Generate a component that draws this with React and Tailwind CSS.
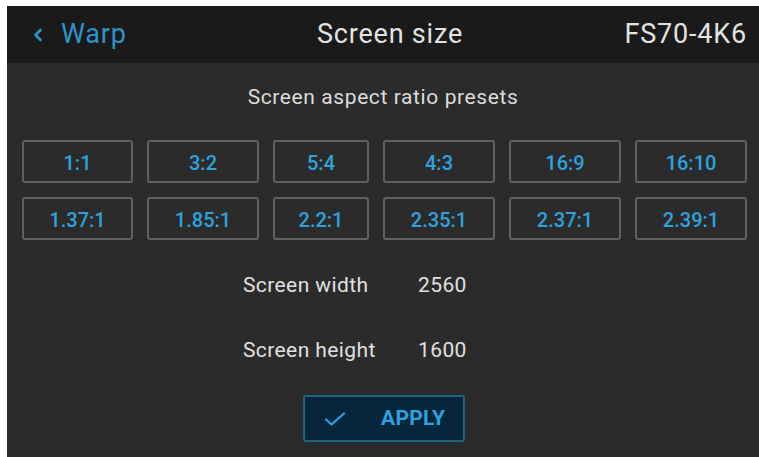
import React from 'react';

const presets = [
  ['1:1', '3:2', '5:4', '4:3', '16:9', '16:10'],
  ['1.37:1', '1.85:1', '2.2:1', '2.35:1', '2.37:1', '2.39:1'],
];

export default function App() {
  return (
    <div className="w-[759px] h-[457px] bg-white pt-[6px] pl-[7px] overflow-hidden font-['Roboto',sans-serif]">
      <div className="h-full bg-[#2b2b2b] flex flex-col">
        {/* Header */}
        <div className="h-[57px] bg-[#1a1a1a] flex items-center justify-between pl-[26px] pr-[12px] shrink-0 text-[27px] tracking-[0.8px]">
          <div className="flex items-center gap-[18px] text-[#2b95c9] w-[200px]">
            <svg width="10" height="14" viewBox="0 0 10 14" className="mt-[1px]">
              <path d="M7.5 2 L2.5 7 L7.5 12" fill="none" stroke="#2b95c9" strokeWidth="2.6" strokeLinecap="round" strokeLinejoin="round" />
            </svg>
            <span>Warp</span>
          </div>
          <span className="text-[#e2e2e2]">Screen size</span>
          <span className="text-[#e2e2e2] w-[200px] text-right">FS70-4K6</span>
        </div>

        {/* Presets */}
        <div className="text-center text-[#dcdcdc] text-[21px] tracking-[0.6px] mt-[24px] leading-none">
          Screen aspect ratio presets
        </div>

        <div className="mt-[32px] pl-[15px] flex flex-col gap-[14px]">
          {presets.map((row, i) => (
            <div key={i} className="grid grid-cols-[111px_112px_96px_112px_112px_112px] gap-x-[14px]">
              {row.map((p) => (
                <button
                  key={p}
                  className="h-[43px] border-2 border-[#606060] rounded-[3px] text-[#2ea2dd] text-[20px] font-medium flex items-center justify-center pt-[3px]"
                >
                  {p}
                </button>
              ))}
            </div>
          ))}
        </div>

        {/* Screen dimensions */}
        <div className="mt-[35px] flex flex-col gap-[44px] text-[#e0e0e0] text-[21px] tracking-[0.4px] leading-none">
          <div className="flex pl-[236px]">
            <span className="w-[175px]">Screen width</span>
            <span>2560</span>
          </div>
          <div className="flex pl-[236px]">
            <span className="w-[175px]">Screen height</span>
            <span>1600</span>
          </div>
        </div>

        {/* Apply */}
        <div className="mt-[34px] pl-[296px]">
          <button className="w-[162px] h-[47px] bg-[#06263c] border-2 border-[#1d6588] rounded-[3px] flex items-center pl-[19px]">
            <svg width="22" height="14" viewBox="0 0 22 14">
              <path d="M2 7.5 L7.5 12.5 L20 1.5" fill="none" stroke="#2ea2dd" strokeWidth="2.2" strokeLinecap="round" strokeLinejoin="round" />
            </svg>
            <span className="ml-[35px] text-[#2ea2dd] text-[21px] font-bold tracking-[0.3px] pt-[1px]">APPLY</span>
          </button>
        </div>
      </div>
    </div>
  );
}
